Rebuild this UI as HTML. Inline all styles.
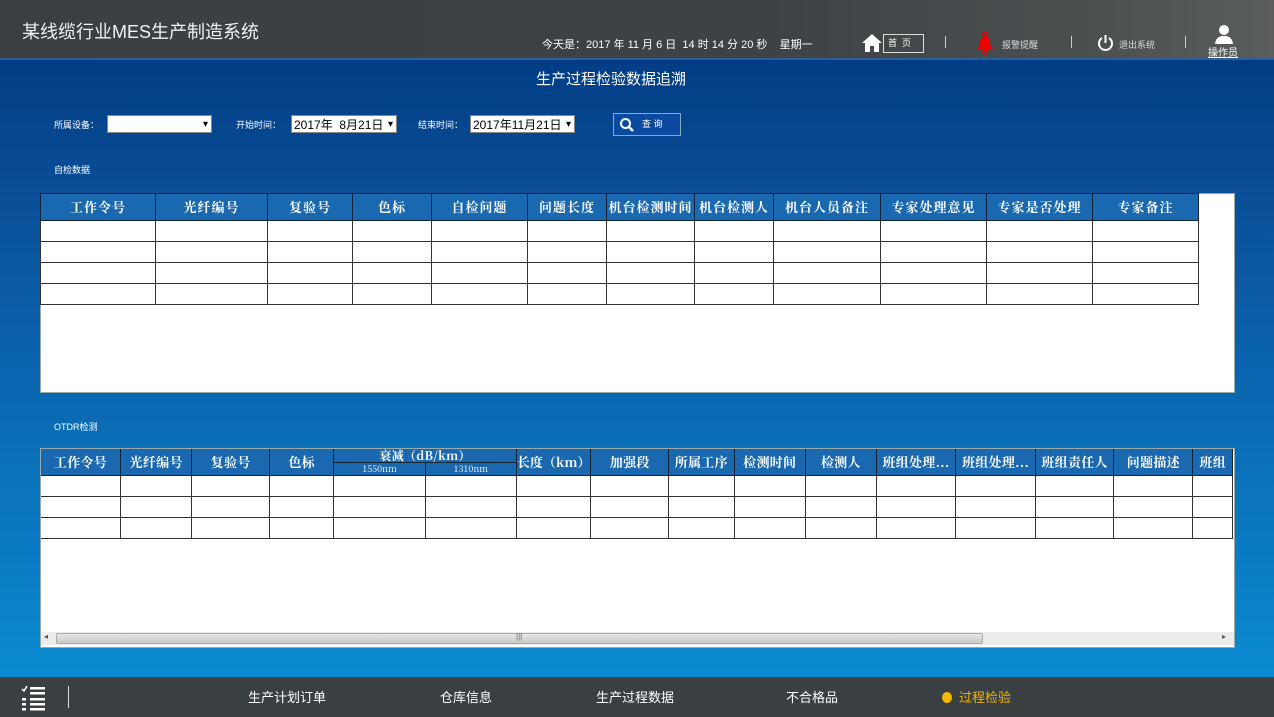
<!DOCTYPE html>
<html><head><meta charset="utf-8">
<style>
*{margin:0;padding:0;box-sizing:border-box}
body{width:1274px;height:717px;overflow:hidden;position:relative;font-family:"Liberation Sans","Noto Sans CJK SC",sans-serif;color:#fff;background:linear-gradient(#013d85 60px,#0a4f98 200px,#0a6fb8 450px,#0a8ad0 677px)}
.hdr{position:absolute;left:0;top:0;width:1274px;height:60px;background:linear-gradient(90deg,#3b3f41 0,#3d4244 60%,#4a4f50 85%,#5a5d5c 100%);border-bottom:2px solid #2c5e9a}
.abs{position:absolute;white-space:nowrap}
.ftr{position:absolute;left:0;top:677px;width:1274px;height:40px;background:#3a3f42}
table{border-collapse:collapse;table-layout:fixed;position:absolute}
.tw{position:absolute;background:#fff;border:1px solid #9aa}
td,th{border:1px solid #333;height:21px;padding:0}
th{background:#1a68b0;color:#fff;font-family:"Noto Serif CJK SC","Liberation Serif",serif;font-weight:bold;font-size:13px;letter-spacing:1px;white-space:nowrap;overflow:hidden;border-color:#123;line-height:16px}
.t2 th{letter-spacing:0.3px;line-height:14px}
.sel{position:absolute;height:18px;background:#fff;color:#000;font-size:12px;line-height:18px;padding-left:2px;border:1px solid #888}
.sel:after{content:"▾";position:absolute;right:3px;top:0;font-size:10px}
.lbl{font-size:9px;color:#fff}
</style></head><body>
<div class="hdr"></div>
<div class="abs" style="left:22px;top:18px;font-size:18px;color:#f2f2f2">某线缆行业MES生产制造系统</div>
<div class="abs" style="left:542px;top:36px;font-size:11px">今天是：2017 年 11 月 6 日&nbsp; 14 时 14 分 20 秒 &nbsp;&nbsp; 星期一</div>
<svg class="abs" style="left:861px;top:33px" width="22" height="20" viewBox="0 0 22 20"><path d="M11 1 L1 10 H4 V19 H9 V13 H13 V19 H18 V10 H21 Z" fill="#fff"/></svg>
<div class="abs" style="left:883px;top:34px;width:41px;height:19px;border:1px solid #ddd;font-size:9px;line-height:17px;padding-left:4px">首 &nbsp;页</div>
<div class="abs" style="left:945px;top:36px;width:1px;height:12px;background:#ccc"></div>
<svg class="abs" style="left:974px;top:31px" width="22" height="24" viewBox="0 0 22 24"><circle cx="11" cy="3" r="2" fill="none" stroke="#e00" stroke-width="1.5"/><path d="M11 4 C6 6 6 12 5 16 L2 19 H20 L17 16 C16 12 16 6 11 4Z" fill="#e00"/><circle cx="11" cy="21" r="2" fill="none" stroke="#e00" stroke-width="1.5"/></svg>
<div class="abs" style="left:1002px;top:38px;font-size:9px;color:#ddd">报警提醒</div>
<div class="abs" style="left:1071px;top:36px;width:1px;height:12px;background:#ccc"></div>
<svg class="abs" style="left:1097px;top:34px" width="17" height="18" viewBox="0 0 17 18"><path d="M5 4 A6.5 6.5 0 1 0 12 4" fill="none" stroke="#fff" stroke-width="2"/><path d="M8.5 1 V9" stroke="#fff" stroke-width="2"/></svg>
<div class="abs" style="left:1119px;top:38px;font-size:9px;color:#ddd">退出系统</div>
<div class="abs" style="left:1185px;top:36px;width:1px;height:12px;background:#ccc"></div>
<svg class="abs" style="left:1215px;top:24px" width="18" height="20" viewBox="0 0 18 20"><circle cx="9" cy="6" r="5" fill="#fff"/><path d="M0 20 C1 13 5 12 9 12 C13 12 17 13 18 20Z" fill="#fff"/></svg>
<div class="abs" style="left:1208px;top:44px;font-size:10px;text-decoration:underline">操作员</div>

<div class="abs" style="left:536px;top:68px;font-size:15px">生产过程检验数据追溯</div>
<div class="abs lbl" style="left:54px;top:118px">所属设备：</div>
<div class="sel" style="left:107px;top:115px;width:105px"></div>
<div class="abs lbl" style="left:236px;top:118px">开始时间：</div>
<div class="sel" style="left:291px;top:115px;width:106px">2017年&nbsp; 8月21日</div>
<div class="abs lbl" style="left:418px;top:118px">结束时间：</div>
<div class="sel" style="left:470px;top:115px;width:105px">2017年11月21日</div>
<div class="abs" style="left:613px;top:113px;width:68px;height:23px;background:#0b4aa0;border:1px solid #8ab;font-size:9px;line-height:21px;padding-left:28px">查 询</div>
<svg class="abs" style="left:619px;top:117px" width="16" height="16" viewBox="0 0 16 16"><circle cx="6.5" cy="6.5" r="4.5" fill="none" stroke="#fff" stroke-width="2"/><path d="M10 10 L14 14" stroke="#fff" stroke-width="2.5"/></svg>

<div class="abs" style="left:54px;top:163px;font-size:9px">自检数据</div>
<div class="tw" style="left:40px;top:193px;width:1195px;height:200px">
<table style="left:-1px;top:-1px">
<colgroup><col width="115"><col width="112"><col width="85"><col width="79"><col width="96"><col width="79"><col width="88"><col width="79"><col width="107"><col width="106"><col width="106"><col width="106"></colgroup>
<tr><th style="height:27px">工作令号</th><th>光纤编号</th><th>复验号</th><th>色标</th><th>自检问题</th><th>问题长度</th><th>机台检测时间</th><th>机台检测人</th><th>机台人员备注</th><th>专家处理意见</th><th>专家是否处理</th><th>专家备注</th></tr>
<tr><td></td><td></td><td></td><td></td><td></td><td></td><td></td><td></td><td></td><td></td><td></td><td></td></tr>
<tr><td></td><td></td><td></td><td></td><td></td><td></td><td></td><td></td><td></td><td></td><td></td><td></td></tr>
<tr><td></td><td></td><td></td><td></td><td></td><td></td><td></td><td></td><td></td><td></td><td></td><td></td></tr>
<tr><td></td><td></td><td></td><td></td><td></td><td></td><td></td><td></td><td></td><td></td><td></td><td></td></tr>
</table></div>

<div class="abs" style="left:54px;top:420px;font-size:9px">OTDR检测</div>
<div class="tw" style="left:40px;top:448px;width:1195px;height:200px;overflow:hidden">
<table class="t2" style="left:-1px;top:-1px">
<colgroup><col width="81"><col width="72"><col width="79"><col width="66"><col width="93"><col width="93"><col width="72"><col width="79"><col width="66"><col width="72"><col width="72"><col width="80"><col width="80"><col width="79"><col width="80"><col width="40"></colgroup>
<tr style="height:14px"><th rowspan="2">工作令号</th><th rowspan="2">光纤编号</th><th rowspan="2">复验号</th><th rowspan="2">色标</th><th colspan="2" style="height:14px;font-size:12px;line-height:12px">衰减（dB/km）</th><th rowspan="2" style="letter-spacing:0">长度（km）</th><th rowspan="2">加强段</th><th rowspan="2">所属工序</th><th rowspan="2">检测时间</th><th rowspan="2">检测人</th><th rowspan="2">班组处理...</th><th rowspan="2">班组处理...</th><th rowspan="2">班组责任人</th><th rowspan="2">问题描述</th><th rowspan="2">班组</th></tr>
<tr style="height:13px"><th style="height:13px;font-size:9px;font-weight:normal;line-height:10px;letter-spacing:0">1550nm</th><th style="height:13px;font-size:9px;font-weight:normal;line-height:10px;letter-spacing:0">1310nm</th></tr>
<tr><td></td><td></td><td></td><td></td><td></td><td></td><td></td><td></td><td></td><td></td><td></td><td></td><td></td><td></td><td></td><td></td></tr>
<tr><td></td><td></td><td></td><td></td><td></td><td></td><td></td><td></td><td></td><td></td><td></td><td></td><td></td><td></td><td></td><td></td></tr>
<tr><td></td><td></td><td></td><td></td><td></td><td></td><td></td><td></td><td></td><td></td><td></td><td></td><td></td><td></td><td></td><td></td></tr>
</table>
<div class="abs" style="left:0;top:183px;width:1193px;height:13px;background:#ececec"></div>
<div class="abs" style="left:15px;top:184px;width:927px;height:11px;background:linear-gradient(#e8e8e8,#c8c8c8);border:1px solid #aaa;border-radius:2px"></div>
<div class="abs" style="left:475px;top:183px;font-size:8px;color:#666">|||</div>
<div class="abs" style="left:3px;top:183px;font-size:8px;color:#555">◂</div>
<div class="abs" style="left:1181px;top:183px;font-size:8px;color:#555">▸</div>
</div>

<div class="ftr"></div>
<svg class="abs" style="left:20px;top:684px" width="28" height="28" viewBox="0 0 28 28"><path d="M2 5 L4 7 L7 2" stroke="#fff" fill="none" stroke-width="1.5"/><rect x="10" y="3" width="15" height="2.5" fill="#fff"/><rect x="10" y="8" width="15" height="2.5" fill="#fff"/><rect x="2" y="14" width="4" height="2.5" fill="#fff"/><rect x="10" y="14" width="15" height="2.5" fill="#fff"/><rect x="2" y="19" width="4" height="2.5" fill="#fff"/><rect x="10" y="19" width="15" height="2.5" fill="#fff"/><rect x="2" y="24" width="4" height="2.5" fill="#fff"/><rect x="10" y="24" width="15" height="2.5" fill="#fff"/></svg>
<div class="abs" style="left:68px;top:686px;width:1px;height:22px;background:#ddd"></div>
<div class="abs" style="left:248px;top:687px;font-size:13px">生产计划订单</div>
<div class="abs" style="left:440px;top:687px;font-size:13px">仓库信息</div>
<div class="abs" style="left:596px;top:687px;font-size:13px">生产过程数据</div>
<div class="abs" style="left:786px;top:687px;font-size:13px">不合格品</div>
<div class="abs" style="left:942px;top:692px;width:10px;height:11px;border-radius:50%;background:#f5b800"></div>
<div class="abs" style="left:959px;top:687px;font-size:13px;color:#f0b400">过程检验</div>
</body></html>
